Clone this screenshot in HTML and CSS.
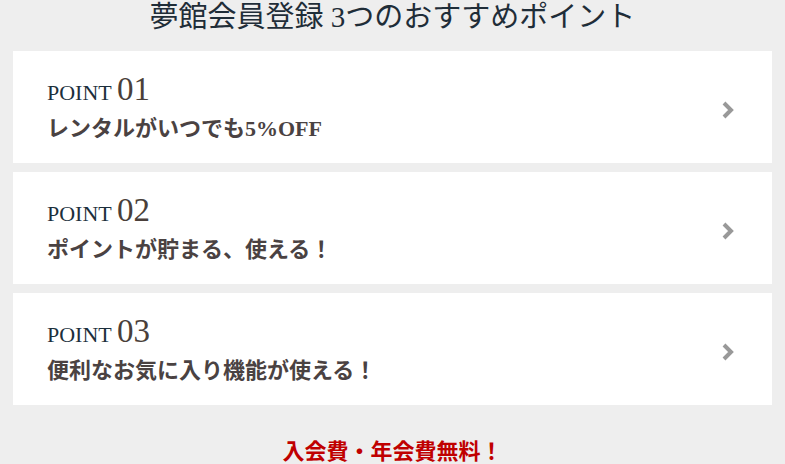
FILE: index.html
```html
<!DOCTYPE html>
<html lang="ja">
<head>
    <meta charset="UTF-8">
    <meta name="viewport" content="width=device-width, initial-scale=1.0">
    <title>夢館会員登録</title>
    <link rel="stylesheet" href="styles.css">
</head>
<body>
    <h2 class="title">夢館会員登録 3つのおすすめポイント</h2>

    <div class="point-list">
        <a class="point-card" href="#">
            <div class="point-text">
                <p class="point-label">POINT <span class="point-num">01</span></p>
                <p class="point-desc">レンタルがいつでも5%OFF</p>
            </div>
            <svg class="chevron" width="14" height="20" viewBox="0 0 14 20">
                <polyline points="3,3 10,10 3,17" fill="none" stroke="#999" stroke-width="4"/>
            </svg>
        </a>

        <a class="point-card" href="#">
            <div class="point-text">
                <p class="point-label">POINT <span class="point-num">02</span></p>
                <p class="point-desc">ポイントが貯まる、使える！</p>
            </div>
            <svg class="chevron" width="14" height="20" viewBox="0 0 14 20">
                <polyline points="3,3 10,10 3,17" fill="none" stroke="#999" stroke-width="4"/>
            </svg>
        </a>

        <a class="point-card" href="#">
            <div class="point-text">
                <p class="point-label">POINT <span class="point-num">03</span></p>
                <p class="point-desc">便利なお気に入り機能が使える！</p>
            </div>
            <svg class="chevron" width="14" height="20" viewBox="0 0 14 20">
                <polyline points="3,3 10,10 3,17" fill="none" stroke="#999" stroke-width="4"/>
            </svg>
        </a>
    </div>

    <p class="free-note">入会費・年会費無料！</p>
</body>
</html>
```

FILE: styles.css
```css
/* General styles */
body {
    margin: 0;
    font-family: "Liberation Serif", "Noto Sans CJK JP", serif;
    background-color: #eeeeee;
}

.title {
    margin: 0;
    height: 51px;
    font-size: 29px;
    font-weight: normal;
    line-height: 35px;
    text-align: center;
    color: #1f2d38;
}

.point-list {
    display: flex;
    flex-direction: column;
    gap: 9px;
    padding: 0 13px;
}

.point-card {
    display: flex;
    align-items: center;
    justify-content: space-between;
    height: 112px;
    padding: 0 37px 0 34px;
    background: #fff;
    text-decoration: none;
}

.point-text {
    margin-top: 3px;
}

.point-text p {
    margin: 0;
}

.point-label {
    font-size: 22px;
    line-height: 32px;
    color: #1c2f3c;
}

.point-num {
    font-size: 33px;
    color: #4a3f3a;
}

.point-desc {
    margin-top: 5px !important;
    font-size: 22px;
    font-weight: bold;
    line-height: 30px;
    color: #4a4242;
}

.chevron {
    display: block;
    margin-top: 5px;
}

.free-note {
    margin: 28px 0 0;
    font-family: "Noto Sans CJK JP", sans-serif;
    font-size: 22px;
    font-weight: bold;
    text-align: center;
    color: #c00000;
}
```
